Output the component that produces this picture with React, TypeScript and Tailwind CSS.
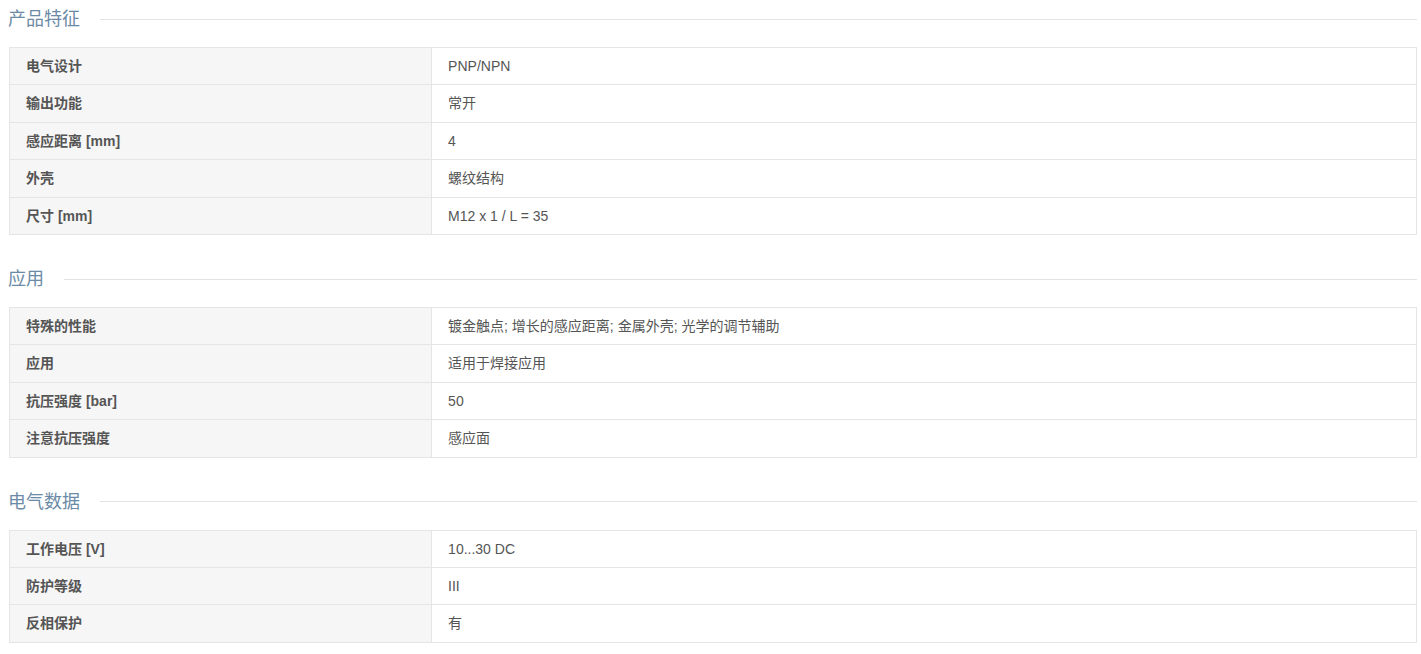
import React from "react";

type Row = [string, string];

const sections: { title: string; rows: Row[] }[] = [
  {
    title: "产品特征",
    rows: [
      ["电气设计", "PNP/NPN"],
      ["输出功能", "常开"],
      ["感应距离 [mm]", "4"],
      ["外壳", "螺纹结构"],
      ["尺寸 [mm]", "M12 x 1 / L = 35"],
    ],
  },
  {
    title: "应用",
    rows: [
      ["特殊的性能", "镀金触点; 增长的感应距离; 金属外壳; 光学的调节辅助"],
      ["应用", "适用于焊接应用"],
      ["抗压强度 [bar]", "50"],
      ["注意抗压强度", "感应面"],
    ],
  },
  {
    title: "电气数据",
    rows: [
      ["工作电压 [V]", "10...30 DC"],
      ["防护等级", "III"],
      ["反相保护", "有"],
    ],
  },
];

export default function App() {
  return (
    <div
      className="bg-white pl-[9px] pr-[4px] text-[#555]"
      style={{ fontFamily: '"Liberation Sans", Arial, "Noto Sans CJK SC", sans-serif' }}
    >
      {sections.map((s, i) => (
        <div key={s.title} className={i === 0 ? "" : "mt-[25px]"}>
          <div className="flex h-[38px] items-center">
            <h2 className="-ml-[1px] text-[18px] font-normal leading-none text-[#6b8aa5]">{s.title}</h2>
            <div className="ml-[20px] h-px flex-1 bg-[#e3e3e3]" />
          </div>
          <table className="mt-[9px] w-full border-collapse border border-[#e5e5e5] text-[14px] leading-[20.4px]">
            <tbody>
              {s.rows.map(([k, v]) => (
                <tr key={k}>
                  <td className="w-[30%] border border-[#e5e5e5] bg-[#f6f6f6] px-[16px] py-[8px] font-bold text-[#555]">
                    {k}
                  </td>
                  <td className="border border-[#e5e5e5] px-[16px] py-[8px] text-[#555]">{v}</td>
                </tr>
              ))}
            </tbody>
          </table>
        </div>
      ))}
    </div>
  );
}
